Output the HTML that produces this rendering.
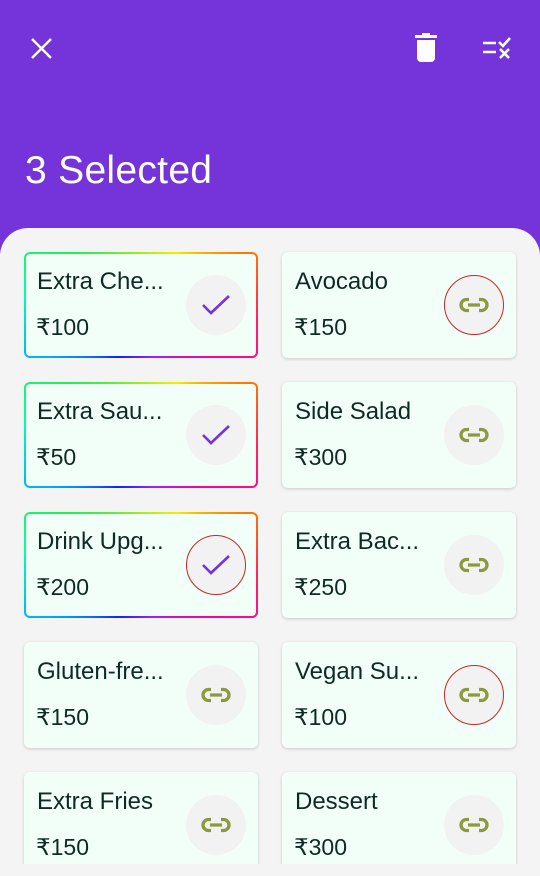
<!DOCTYPE html>
<html><head><meta charset="utf-8"><style>
*{margin:0;padding:0;box-sizing:border-box}
body{width:540px;height:876px;overflow:hidden;background:#f4f4f4;font-family:"Liberation Sans","DejaVu Sans",sans-serif;position:relative}
.hdr{position:absolute;left:0;top:0;width:540px;height:260px;background:#7434d9}
.h1{position:absolute;left:25px;top:149px;color:#fff;font-size:39px;letter-spacing:0.3px}
.body{position:absolute;left:0;top:228px;width:540px;height:636px;background:#f4f4f4;border-radius:28px 28px 0 0;overflow:hidden}
.card{position:absolute;width:234px;height:106px;background:#f2fff9;border-radius:6px;box-shadow:0 1px 3px rgba(0,0,0,.18)}
.sel{border:2px solid transparent;background:linear-gradient(#f2fff9,#f2fff9) padding-box,conic-gradient(from -55deg,#22ee55,#eeee00 25%,#ff7700 33%,#ff2266 42%,#ff0099 50%,#9922ff 62%,#1122ff 72%,#00aaff 82%,#00ffaa 92%,#22ee55) border-box;box-shadow:none}
.t{position:absolute;left:13px;top:16px;font-size:24px;color:#0f2a24;white-space:nowrap}
.p{position:absolute;left:12px;top:62px;font-size:23px;color:#0f2a24}
.c{position:absolute;right:12px;top:23px;width:60px;height:60px;border-radius:50%;background:#f3f2f3;display:flex;align-items:center;justify-content:center}
.sel .t{left:11px;top:14px}.sel .p{left:10px;top:60px}.sel .c{right:10px;top:21px}
.r{border:1.5px solid #c62828}
</style></head><body>
<div class="hdr">
<svg style="position:absolute;left:31px;top:38px" width="21" height="21"><path d="M1 1L20 20M20 1L1 20" stroke="#fff" stroke-width="2.4"/></svg>
<svg style="position:absolute;left:414px;top:33px" width="24" height="30"><rect x="1" y="2" width="22" height="3" fill="#fff"/><rect x="8" y="0" width="8" height="3" fill="#fff"/><path d="M3 7h18v18a4 4 0 0 1-4 4H7a4 4 0 0 1-4-4z" fill="#fff"/></svg>
<svg style="position:absolute;left:482px;top:35px" width="32" height="26"><path d="M1 8h13M1 17h13" stroke="#fff" stroke-width="2.6"/><path d="M17 7l4 4 7-8" stroke="#fff" stroke-width="2.6" fill="none"/><path d="M18 14l9 9M27 14l-9 9" stroke="#fff" stroke-width="2.6"/></svg>
<div class="h1">3 Selected</div>
</div>
<div class="body" id="b"></div>
<script>
var items=[["Extra Che...","₹100",1,0],["Avocado","₹150",0,1],["Extra Sau...","₹50",1,0],["Side Salad","₹300",0,0],["Drink Upg...","₹200",1,1],["Extra Bac...","₹250",0,0],["Gluten-fre...","₹150",0,0],["Vegan Su...","₹100",0,1],["Extra Fries","₹150",0,0],["Dessert","₹300",0,0]];
var chk='<svg width="30" height="22"><path d="M2 11l8 8L28 2" stroke="#7434d9" stroke-width="2.6" fill="none"/></svg>';
var lnk='<svg width="32" height="18"><path d="M11 3.5H8.5a5.5 5.5 0 0 0 0 11H11M21 3.5h2.5a5.5 5.5 0 0 1 0 11H21M10 9h12" stroke="#8a9a3c" stroke-width="3.3" fill="none"/></svg>';
var h='';
items.forEach(function(it,i){var x=i%2?282:24,y=24+Math.floor(i/2)*130;
h+='<div class="card'+(it[2]?' sel':'')+'" style="left:'+x+'px;top:'+y+'px"><div class="t">'+it[0]+'</div><div class="p">'+it[1]+'</div><div class="c'+(it[3]?' r':'')+'">'+(it[2]?chk:lnk)+'</div></div>';});
document.getElementById('b').innerHTML=h;
</script>
</body></html>
